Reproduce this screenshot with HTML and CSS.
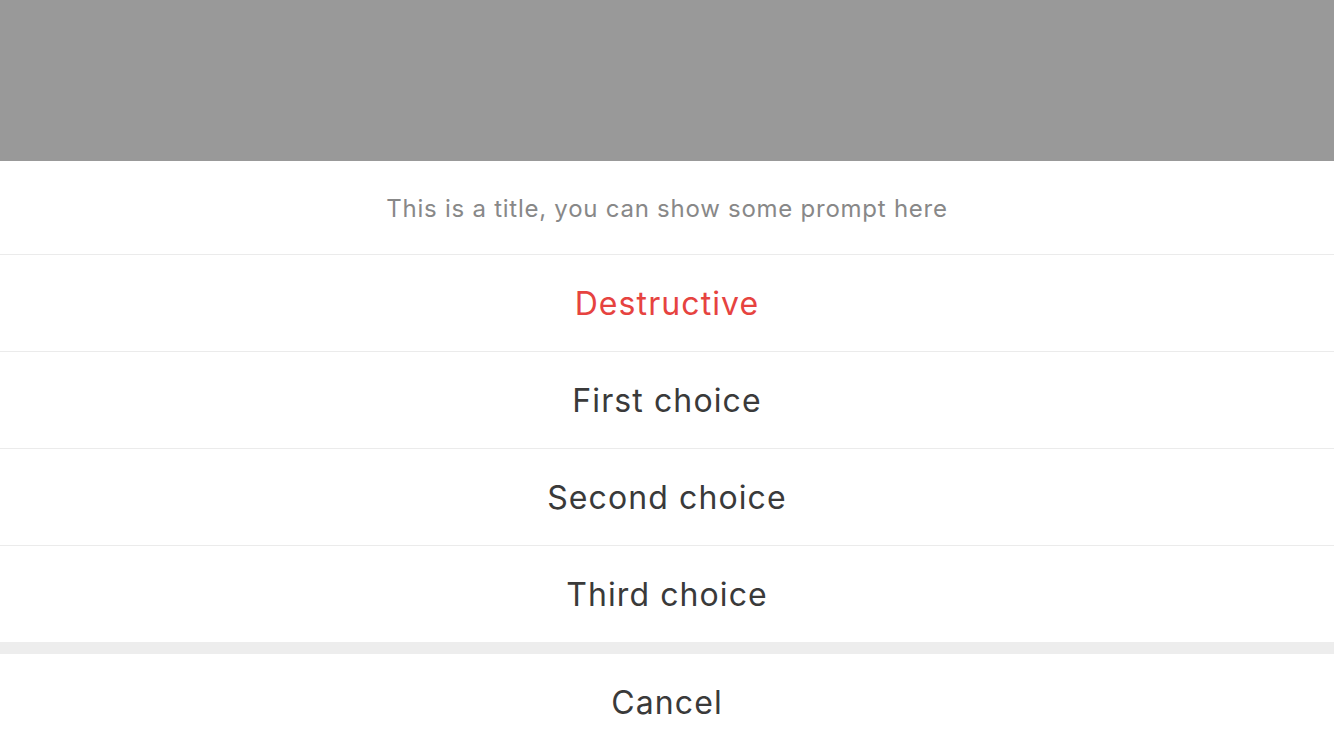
FILE: index.html
```html
<!DOCTYPE html>
<html>
<head>
<meta charset="utf-8">
<link rel="stylesheet" href="styles.css">
</head>
<body>
<div class="mask"></div>
<div class="sheet">
  <div class="title">This is a title, you can show some prompt here</div>
  <div class="menu">
    <div class="item danger">Destructive</div>
    <div class="item">First choice</div>
    <div class="item">Second choice</div>
    <div class="item last">Third choice</div>
  </div>
  <div class="gap"></div>
  <div class="item cancel">Cancel</div>
</div>
</body>
</html>
```
FILE: styles.css
```css
html, body { margin: 0; padding: 0; }
body {
  width: 1334px;
  height: 750px;
  overflow: hidden;
  background: #fff;
  font-family: Inter, "Noto Sans", sans-serif;
  display: flex;
  flex-direction: column;
}
.mask { height: 161px; background: #999999; flex: none; }
.sheet { display: flex; flex-direction: column; background: #fff; }
.title {
  height: 94px;
  box-sizing: border-box;
  padding-top: 2px;
  border-bottom: 1px solid #ebebeb;
  display: flex;
  align-items: center;
  justify-content: center;
  font-size: 24px;
  color: #888888;
  letter-spacing: 0.75px;
}
.menu { display: flex; flex-direction: column; }
.item {
  height: 96px;
  border-bottom: 1px solid #ebebeb;
  display: flex;
  align-items: center;
  justify-content: center;
  font-size: 32px;
  color: #3a3a3a;
  letter-spacing: 1.1px;
}
.item.last { border-bottom: none; }
.item.danger { color: #e64340; }
.gap { height: 12px; background: #ededed; }
.item.cancel { border-bottom: none; }
```
